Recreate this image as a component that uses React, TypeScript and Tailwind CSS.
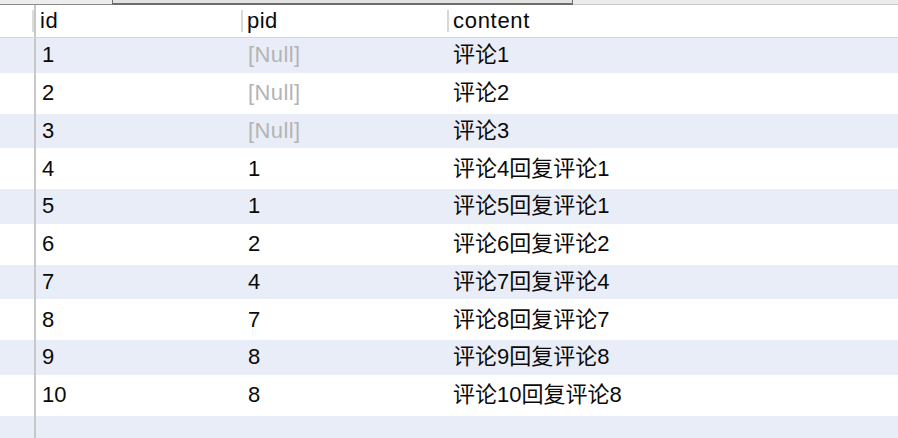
import React from "react";

const rows: [string, string | null, string][] = [
  ["1", null, "评论1"],
  ["2", null, "评论2"],
  ["3", null, "评论3"],
  ["4", "1", "评论4回复评论1"],
  ["5", "1", "评论5回复评论1"],
  ["6", "2", "评论6回复评论2"],
  ["7", "4", "评论7回复评论4"],
  ["8", "7", "评论8回复评论7"],
  ["9", "8", "评论9回复评论8"],
  ["10", "8", "评论10回复评论8"],
];

export default function App() {
  return (
    <div
      className="w-[898px] h-[438px] overflow-hidden bg-white text-[22px] text-[#0a0a0a]"
      style={{ fontFamily: '"Liberation Sans", "Noto Sans CJK SC", sans-serif' }}
    >
      {/* top strip */}
      <div className="flex h-[5px]">
        <div className="w-[112px] bg-[#ececec] border-b border-[#8a8a8a]" />
        <div className="w-[461px] bg-[#e2e2e2] border-x border-b-2 border-[#6e6e6e]" />
        <div className="flex-1 bg-[#ececec] border-b border-[#c8c8c8]" />
      </div>
      {/* header */}
      <div className="flex h-[33px] border-b border-[#d6d6d6] items-center">
        <div className="w-[32px] h-full" />
        <div className="w-[2px] h-[22px] bg-[#dcdcdc]" />
        <div className="w-[2px] h-full bg-[#c8c8c8]" />
        <div className="w-[205px] pl-[4px] leading-none tracking-[0.5px]">id</div>
        <div className="w-[2px] h-[22px] bg-[#d8d8d8]" />
        <div className="w-[204px] pl-[4px] leading-none tracking-[0.5px]">pid</div>
        <div className="w-[2px] h-[22px] bg-[#d8d8d8]" />
        <div className="flex-1 pl-[4px] leading-none tracking-[0.7px]">content</div>
      </div>
      {rows.map(([id, pid, content], i) => (
        <div
          key={id}
          className={`flex items-center ${i % 2 === 0 ? "h-[34.5px] bg-[#e9edf7]" : "h-[41px] bg-white"}`}
        >
          <div className="w-[34px] h-full" />
          <div className="w-[2px] h-full bg-[#c8c8c8]" />
          <div className="w-[205px] pl-[6px] leading-none">{id}</div>
          <div className="w-[206px] pl-[7px] leading-none">
            {pid === null ? <span className="text-[#b4b4b4] tracking-[0.4px]">[Null]</span> : pid}
          </div>
          <div className="flex-1 pl-[6px] leading-none">{content}</div>
        </div>
      ))}
      <div className="flex h-[40px] bg-[#e9edf7]">
        <div className="w-[34px] h-full" />
        <div className="w-[2px] h-full bg-[#c8c8c8]" />
      </div>
    </div>
  );
}
